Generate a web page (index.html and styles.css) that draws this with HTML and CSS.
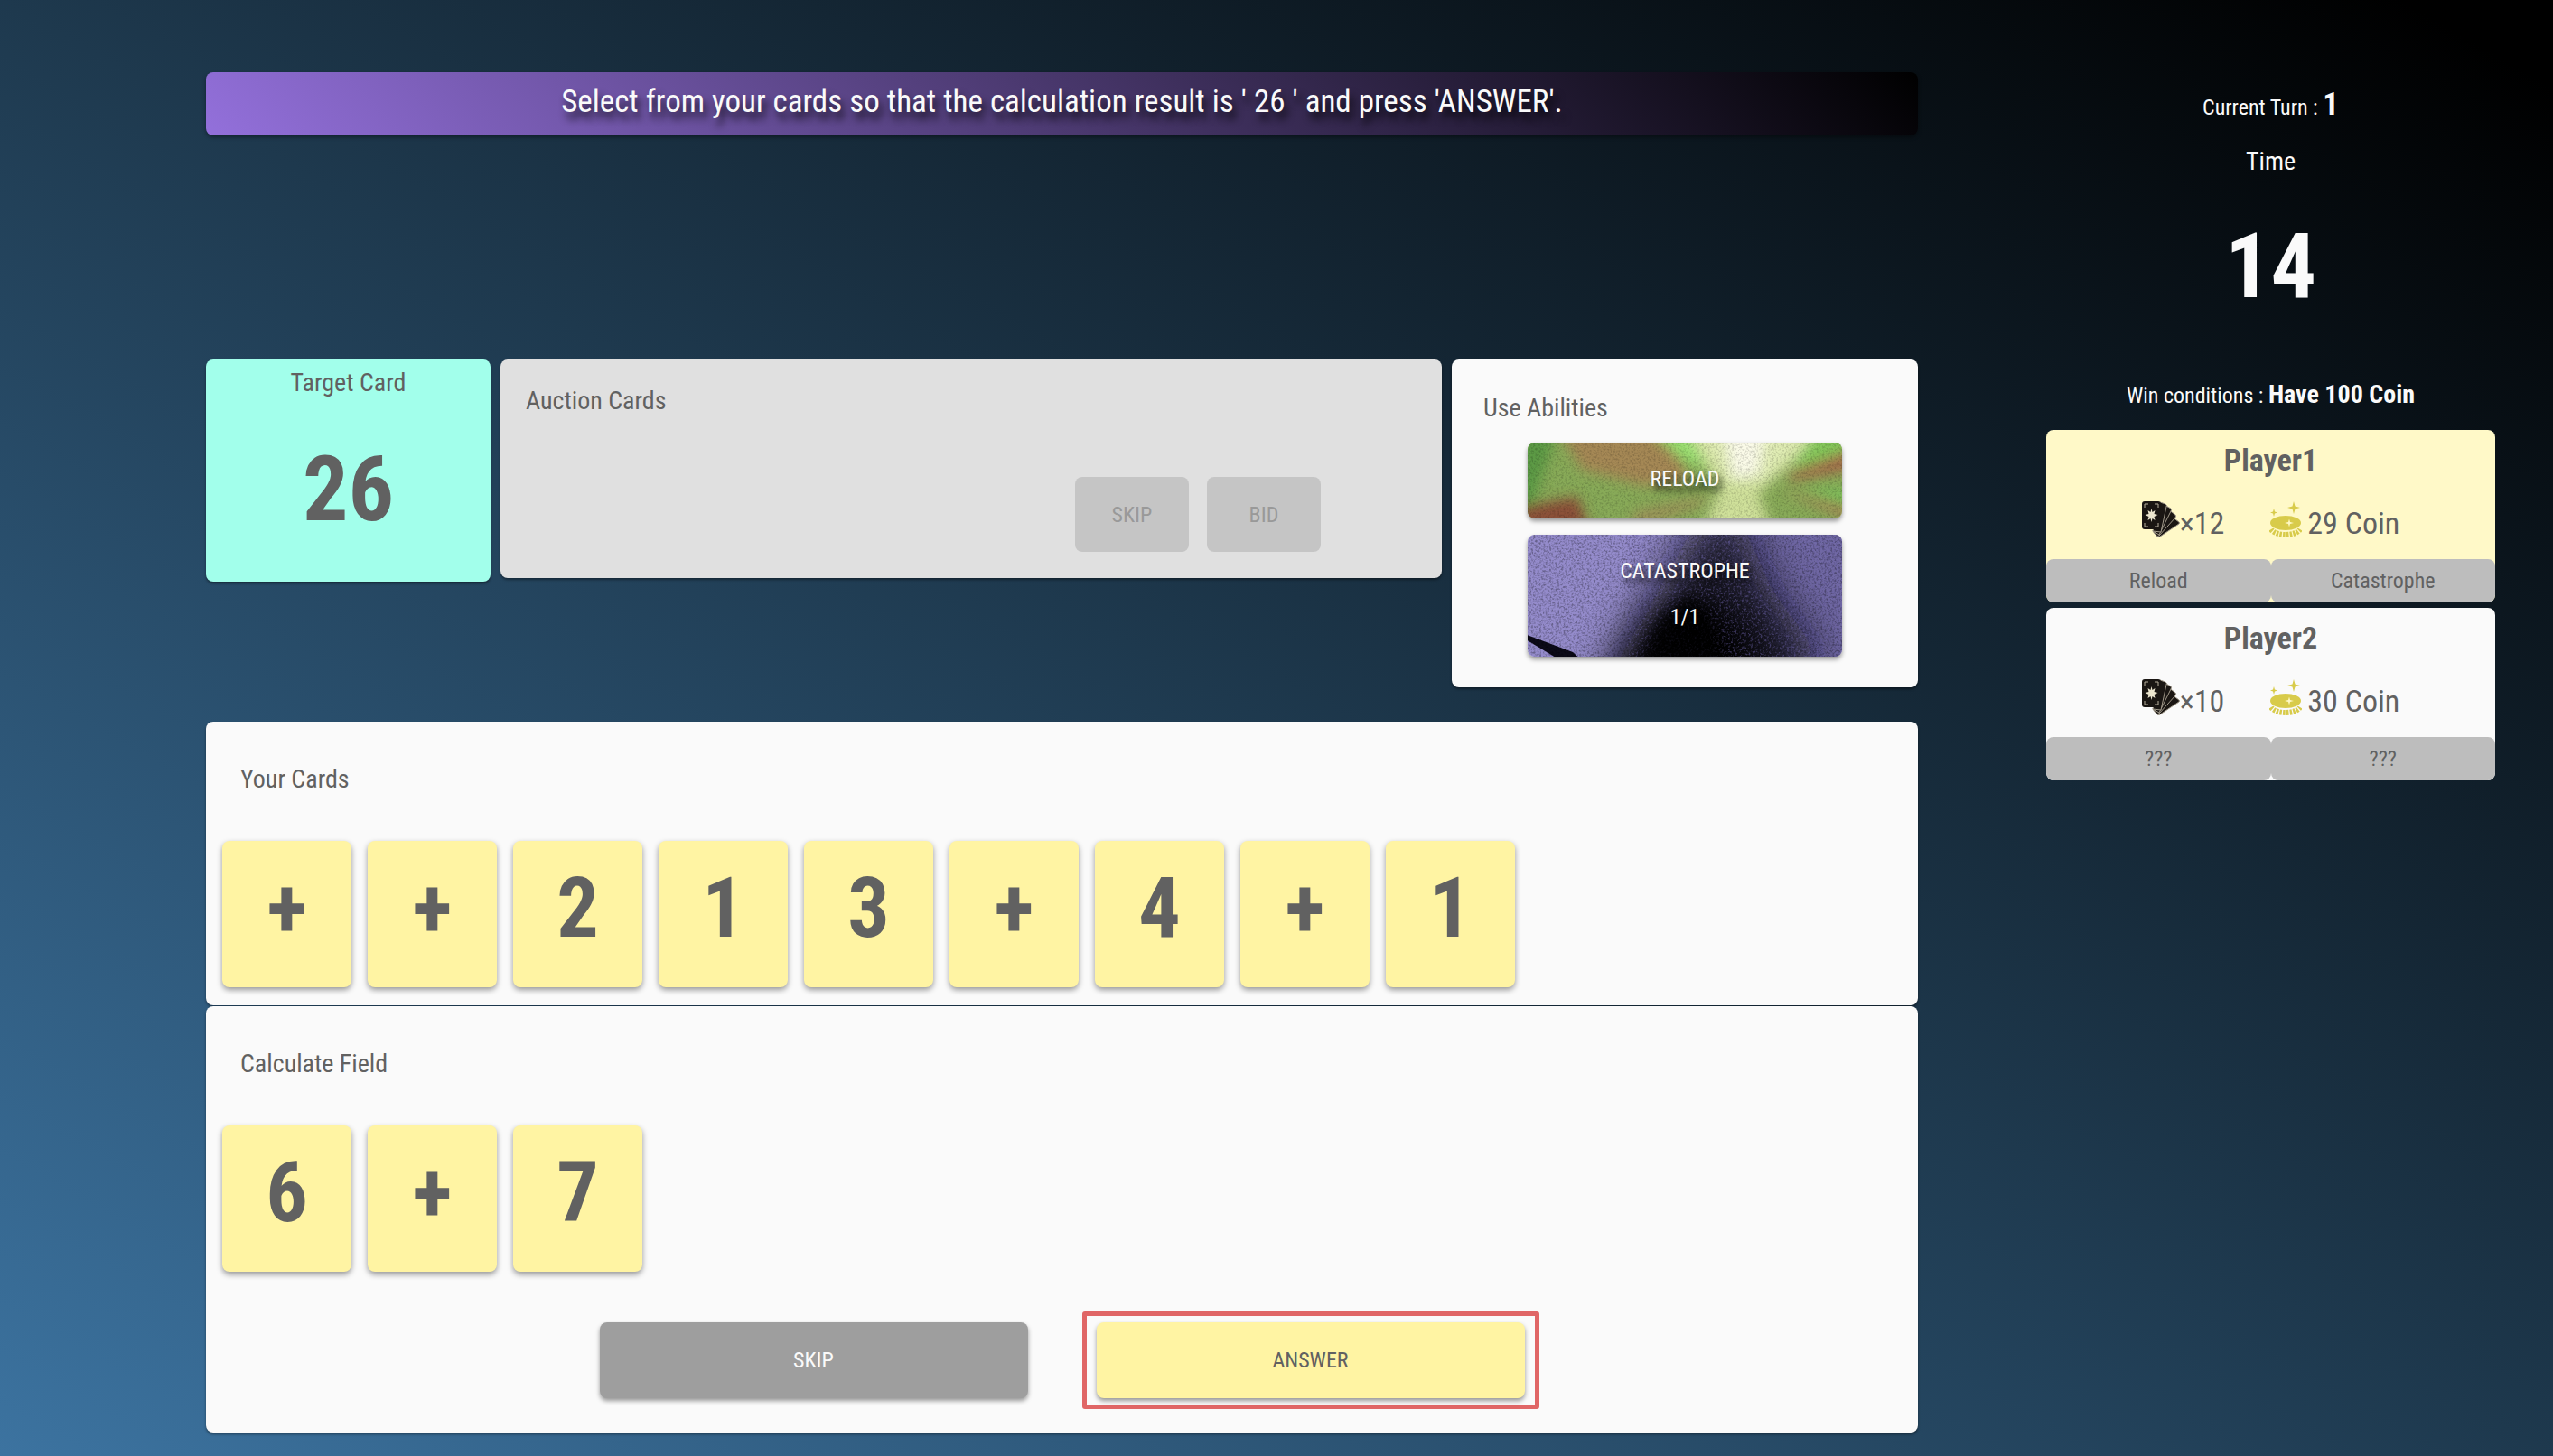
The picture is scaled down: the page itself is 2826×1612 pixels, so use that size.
FILE: index.html
```html
<!DOCTYPE html>
<html lang="en">
<head>
<meta charset="utf-8">
<title>Card Auction Game</title>
<link rel="stylesheet" href="styles.css">
</head>
<body>
<svg class="defs" width="0" height="0" aria-hidden="true">
  <defs>
    <symbol id="icon-cards" viewBox="0 0 42 40">
      <g fill="#1a1613" stroke="#a39b8c" stroke-width="1" stroke-linejoin="round">
        <path d="M33 17L41 23Q42 24 41 25L20 39Q18 40 17 39L12 33z"/>
        <path d="M29 9L37 15Q38 16 37 18L19 38Q17 39 16 38L12 33z"/>
        <path d="M25 4L32 8Q33 9 32 11L19 37 12 33z"/>
        <path d="M20 1L26 3Q28 4 27 6L21 34 12 33z"/>
      </g>
      <rect x="0" y="0" width="21" height="31" rx="3" fill="#1a1613"/>
      <path d="M3 7V3h4M14 3h4v4M3 24v4h4M14 28h4v-4" fill="none" stroke="#b5ad9c" stroke-width="1"/>
      <path d="M10.500 8l1 4 3-2-1 4 4 1-4 2 1 4-3-2-1 4-1-4-3 2 1-4-4-2 4-1-1-4 3 2z" fill="#ece6cf"/>
    </symbol>
    <symbol id="icon-coin" viewBox="0 0 36 40">
      <g fill="#d8cb4a">
        <path d="M27 0l1.500 5.500L34 7l-5.500 1.500L27 14l-1.500-5.500L20 7l5.500-1.500z"/>
        <path d="M5 8l1 3.500L9 12.500l-3 1L5 17l-1-3.500-3-1 3-1z"/>
        <ellipse cx="18" cy="24" rx="17" ry="8"/>
      </g>
      <path d="M2 31c5 8 27 8 32 0" fill="none" stroke="#d8cb4a" stroke-width="6" stroke-dasharray="2.500 1.200"/>
      <path d="M22 19.500l1 3.500 4 1-4 1-1 3.500-1-3.500-4-1 4-1z" fill="#fff9c4"/>
    </symbol>
    <filter id="soft" x="-30%" y="-30%" width="160%" height="160%"><feGaussianBlur stdDeviation="7"/></filter>
    <filter id="wide" x="-80%" y="-80%" width="260%" height="260%"><feGaussianBlur stdDeviation="24"/></filter>
    <filter id="grain" x="0" y="0" width="100%" height="100%" color-interpolation-filters="sRGB">
      <feTurbulence type="fractalNoise" baseFrequency="0.45" numOctaves="2" seed="4"/>
      <feColorMatrix values="0 0 0 0 0  0 0 0 0 0  0 0 0 0 0  3 0 0 0 -1.300"/>
    </filter>
    <filter id="violet-grain" x="0" y="0" width="100%" height="100%" color-interpolation-filters="sRGB">
      <feTurbulence type="fractalNoise" baseFrequency="0.4" numOctaves="2" seed="9"/>
      <feColorMatrix values="0 0 0 0 0.420  0 0 0 0 0.380  0 0 0 0 0.650  4 0 0 0 -2"/>
    </filter>
  </defs>
</svg>

<div class="board">
  <main class="table">
    <p class="banner">Select from your cards so that the calculation result is ' 26 ' and press 'ANSWER'.</p>

    <div class="round">
      <section class="paper target">
        <h2 class="label">Target Card</h2>
        <p class="target-value">26</p>
      </section>
      <section class="paper auction">
        <h2 class="label">Auction Cards</h2>
        <div class="auction-actions">
          <button class="btn btn-small" type="button" disabled>SKIP</button>
          <button class="btn btn-small" type="button" disabled>BID</button>
        </div>
      </section>
      <section class="paper abilities">
        <h2 class="label">Use Abilities</h2>
        <button class="btn ability" type="button">
          <svg class="texture" viewBox="0 0 348 84" preserveAspectRatio="none" aria-hidden="true">
            <rect width="348" height="84" fill="#88aa58"/>
            <g filter="url(#soft)">
              <path d="M-20-20H35L5 70-20 80z" fill="#5c9a45"/>
              <path d="M30-20H150L180 42 130 48 60 30z" fill="#a58855"/>
              <path d="M-20 74L55 60 72 105H-20z" fill="#8b4f38"/>
              <path d="M120 76L205 58 190 70 110 100z" fill="#9c9158"/>
              <path d="M135-14H175L205 30 172 20z" fill="#98e070"/>
              <path d="M172-20H340L256 56 272 105H190L212 52z" fill="#cfe09a"/>
              <path d="M180-20H325L262 44 222 44z" fill="#e0ecb4"/>
              <path d="M215-20H265L255 35 228 40z" fill="#fafae8"/>
              <path d="M320-14H370V8L290 30z" fill="#84c75a"/>
              <path d="M368 4V28L295 42 285 36z" fill="#a5674a"/>
              <path d="M278 52L368 76V90z" fill="#a97a52"/>
              <path d="M300 50L368 54V74z" fill="#7ac25a"/>
            </g>
            <rect width="348" height="84" filter="url(#grain)" opacity=".16"/>
          </svg>
          <span class="ability-name">RELOAD</span>
        </button>
        <button class="btn ability" type="button">
          <svg class="texture" viewBox="0 0 348 136" preserveAspectRatio="none" aria-hidden="true">
            <rect width="348" height="136" fill="#948bcb"/>
            <rect x="220" y="-40" width="190" height="220" fill="#7068a4" filter="url(#wide)"/>
            <path d="M195-30H230L270 60 320 130 300 190H70L130 90z" fill="#0a0814" filter="url(#wide)" opacity=".85"/>
            <path d="M135 90L205 60 250 110 270 190H90z" fill="#000" filter="url(#wide)"/>
            <path d="M0 112L50 131 60 140H36L0 118z" fill="#0c0a18"/>
            <rect x="110" width="238" height="136" filter="url(#violet-grain)" opacity=".5"/>
            <rect width="348" height="136" filter="url(#grain)" opacity=".3"/>
            <path d="M120 150L145 95 180 65 205 90 220 150z" fill="#000" filter="url(#soft)" opacity=".8"/>
          </svg>
          <span class="ability-name">CATASTROPHE</span>
          <span class="ability-name">1/1</span>
        </button>
      </section>
    </div>

    <section class="paper hand">
      <h2 class="label">Your Cards</h2>
      <div class="cards">
        <button class="card" type="button">+</button>
        <button class="card" type="button">+</button>
        <button class="card" type="button">2</button>
        <button class="card" type="button">1</button>
        <button class="card" type="button">3</button>
        <button class="card" type="button">+</button>
        <button class="card" type="button">4</button>
        <button class="card" type="button">+</button>
        <button class="card" type="button">1</button>
      </div>
    </section>

    <section class="paper hand field">
      <h2 class="label">Calculate Field</h2>
      <div class="cards">
        <button class="card" type="button">6</button>
        <button class="card" type="button">+</button>
        <button class="card" type="button">7</button>
      </div>
      <div class="actions">
        <button class="btn btn-skip" type="button">SKIP</button>
        <div class="highlight"><button class="btn btn-answer" type="button">ANSWER</button></div>
      </div>
    </section>
  </main>

  <aside class="status">
    <p class="turn">Current Turn : <strong>1</strong></p>
    <p class="time-label">Time</p>
    <p class="time">14</p>
    <p class="win">Win conditions : <strong>Have 100 Coin</strong></p>

    <section class="player player-active">
      <h3 class="player-name">Player1</h3>
      <div class="stats">
        <span class="stat"><svg class="icon-cards" aria-hidden="true"><use href="#icon-cards"/></svg>×12</span>
        <span class="stat"><svg class="icon-coin" aria-hidden="true"><use href="#icon-coin"/></svg>29 Coin</span>
      </div>
      <div class="chips"><span class="chip">Reload</span><span class="chip">Catastrophe</span></div>
    </section>
    <section class="player">
      <h3 class="player-name">Player2</h3>
      <div class="stats">
        <span class="stat"><svg class="icon-cards" aria-hidden="true"><use href="#icon-cards"/></svg>×10</span>
        <span class="stat"><svg class="icon-coin" aria-hidden="true"><use href="#icon-coin"/></svg>30 Coin</span>
      </div>
      <div class="chips"><span class="chip">???</span><span class="chip">???</span></div>
    </section>
  </aside>
</div>
</body>
</html>
```
FILE: styles.css
```css
* {
  box-sizing: border-box;
}

body {
  margin: 0;
  min-height: 100vh;
  background: linear-gradient(to top right, #3c73a0, #1e394e 50%, #000 97%) no-repeat #000;
  color: #616161;
  font-family: "Roboto Condensed", "Liberation Sans Narrow", "Open Sans Condensed", "DejaVu Sans Condensed", sans-serif;
  font-size: 24px;
  line-height: 32px;
}

h2,
h3,
p {
  margin: 0;
}

button {
  border: 0;
  color: inherit;
  font: inherit;
  cursor: pointer;
}

.defs {
  position: absolute;
}

.board {
  display: grid;
  grid-template-columns: 228fr 1895fr 142fr 497fr 64fr;
  padding: 80px 0 24px;
}

/* Play area */
.table {
  grid-column: 2;
}

.banner {
  height: 70px;
  margin-bottom: 248px;
  border-radius: 8px;
  background: linear-gradient(45deg, #9370db, #000);
  box-shadow: 0 2px 4px rgba(0, 0, 0, 0.4);
  color: #fafafa;
  font-size: 35px;
  line-height: 66px;
  text-align: center;
  text-shadow: 4px 8px 8px rgba(0, 0, 0, 0.8);
}

.paper {
  border-radius: 8px;
  background: #fafafa;
  box-shadow: 0 2px 3px rgba(0, 0, 0, 0.4);
}

.label {
  font-size: 28px;
  font-weight: 400;
  line-height: 40px;
}

.round {
  display: grid;
  grid-template-columns: 315fr 1042fr 516fr;
  align-items: start;
  gap: 11px;
  margin-bottom: 38px;
}

.target {
  height: 246px;
  padding-top: 6px;
  background: #a2ffeb;
  text-align: center;
}

.target-value {
  font-size: 100px;
  font-weight: 700;
  line-height: 112px;
  padding-top: 42px;
}

.auction {
  height: 242px;
  padding: 26px 28px;
  background: #e0e0e0;
}

.auction-actions {
  display: flex;
  justify-content: flex-end;
  gap: 20px;
  padding: 64px 106px 0 0;
}

.btn {
  border-radius: 8px;
  box-shadow: 0 3px 5px rgba(0, 0, 0, 0.4);
}

.btn-small {
  width: 126px;
  height: 83px;
  background: #c5c5c5;
  box-shadow: none;
  color: #999;
  cursor: default;
}

.abilities {
  display: flex;
  flex-direction: column;
  align-items: center;
  gap: 18px;
  padding: 34px 35px;
}

.abilities .label {
  align-self: flex-start;
}

.ability {
  position: relative;
  display: flex;
  flex-direction: column;
  gap: 19px;
  width: 348px;
  padding: 24px 0 28px;
  overflow: hidden;
  color: #fafafa;
  text-align: center;
}

.texture {
  position: absolute;
  inset: 0;
  width: 100%;
  height: 100%;
}

.ability-name {
  position: relative;
  text-shadow: 4px 6px 6px rgba(0, 0, 0, 0.8);
}

.hand {
  margin-bottom: 1px;
  padding: 44px 18px 20px;
}

.field {
  margin-bottom: 0;
  padding-bottom: 26px;
}

.hand .label {
  padding-left: 20px;
}

.cards {
  display: flex;
  gap: 18px;
  padding-top: 48px;
}

.card {
  width: 143px;
  height: 162px;
  padding: 0 0 12px;
  border-radius: 8px;
  background: #fff4a3;
  box-shadow: 0 3px 6px rgba(0, 0, 0, 0.4);
  font-size: 92px;
  font-weight: 700;
  line-height: 120px;
}

.actions {
  display: flex;
  justify-content: center;
  align-items: center;
  gap: 60px;
  padding: 44px 0 0 16px;
}

.btn-skip,
.btn-answer {
  width: 474px;
  height: 84px;
}

.btn-skip {
  background: #9e9e9e;
  color: #fafafa;
}

.btn-answer {
  display: block;
  background: #fff4a3;
}

.highlight {
  padding: 7px 11px;
  border: 5px solid #e06666;
  border-radius: 3px;
}

/* Status column */
.status {
  grid-column: 4;
  color: #fafafa;
  text-align: center;
}

.turn {
  padding-top: 12px;
  line-height: 48px;
}

.turn strong {
  font-size: 35px;
}

.time-label {
  padding-top: 16px;
  font-size: 28px;
  line-height: 40px;
}

.time {
  padding-top: 40px;
  font-size: 100px;
  line-height: 112px;
  font-weight: 700;
}

.win {
  padding: 62px 0 14px;
  line-height: 48px;
}

.win strong {
  font-size: 28px;
}

.player {
  margin-bottom: 6px;
  border-radius: 8px;
  overflow: hidden;
  background: #fafafa;
  color: #616161;
}

.player-active {
  background: #fff9c8;
}

.player-name {
  padding-top: 9px;
  font-size: 34px;
  line-height: 48px;
}

.stats {
  display: flex;
  justify-content: center;
  gap: 50px;
  padding: 22px 0 16px;
}

.stat {
  display: flex;
  align-items: center;
  font-size: 34px;
  line-height: 48px;
}

.icon-cards {
  width: 42px;
  height: 40px;
  margin-bottom: 8px;
}

.icon-coin {
  width: 36px;
  height: 40px;
  margin: 0 6px 8px 0;
}

.chips {
  display: grid;
  grid-template-columns: 1fr 1fr;
}

.chip {
  border-radius: 8px;
  background: #bdbdbd;
  line-height: 48px;
}
```
